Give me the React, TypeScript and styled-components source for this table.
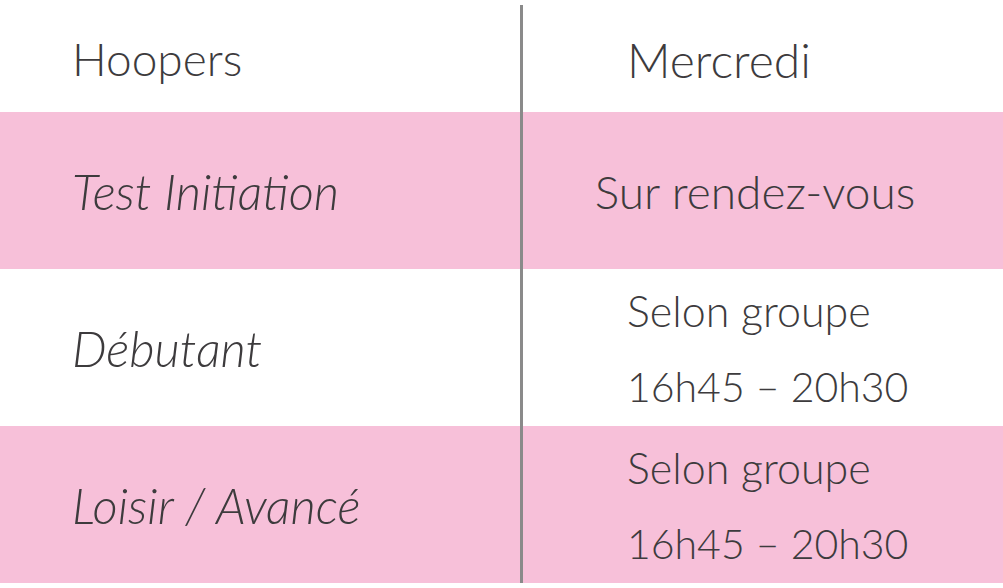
import styled, { createGlobalStyle } from "styled-components"

const Global = createGlobalStyle`
  html, body {
    margin: 0;
    padding: 0;
    background: #ffffff;
  }
  body {
    font-family: Lato, "Open Sans", sans-serif;
    font-weight: 300;
    color: #3d3b3d;
  }
`

const Table = styled.div`
  display: flex;
  flex-direction: column;
  width: 1003px;
  height: 588px;
  padding-top: 5px;
  box-sizing: border-box;
`

const Row = styled.div<{ $pink?: boolean; $height: number }>`
  display: flex;
  height: ${(p) => p.$height}px;
  background: ${(p) => (p.$pink ? "#f7c0d9" : "#ffffff")};
`

const LeftCell = styled.div<{ $italic?: boolean }>`
  width: 523px;
  border-right: 3px solid #8a8a8a;
  display: flex;
  align-items: center;
  padding-left: 72px;
  box-sizing: border-box;
  font-size: ${(p) => (p.$italic ? "49px" : "46px")};
  font-style: ${(p) => (p.$italic ? "italic" : "normal")};
`

const RightCell = styled.div<{ $center?: boolean }>`
  flex: 1;
  display: flex;
  flex-direction: column;
  justify-content: center;
  align-items: ${(p) => (p.$center ? "center" : "flex-start")};
  padding-left: ${(p) => (p.$center ? "0" : "104px")};
  padding-right: ${(p) => (p.$center ? "16px" : "0")};
  padding-top: 2px;
  font-size: 45px;
`

const Line = styled.div<{ $size?: number }>`
  line-height: 76px;
  font-size: ${(p) => (p.$size ? `${p.$size}px` : "inherit")};
`

const rows = [
  { label: "Test Initiation", lines: ["Sur rendez-vous"], pink: true, center: true },
  { label: "Débutant", lines: ["Selon groupe", "16h45 – 20h30"], pink: false },
  { label: "Loisir / Avancé", lines: ["Selon groupe", "16h45 – 20h30"], pink: true },
]

const lineSize = (l: string) => (/\d/.test(l) ? 41 : l.startsWith("Selon") ? 43 : 46)

export default function App() {
  return (
    <>
      <Global />
      <Table>
        <Row $height={107}>
          <LeftCell>Hoopers</LeftCell>
          <RightCell>
            <Line $size={48}>Mercredi</Line>
          </RightCell>
        </Row>
        {rows.map((r) => (
          <Row key={r.label} $pink={r.pink} $height={157}>
            <LeftCell $italic>{r.label}</LeftCell>
            <RightCell $center={r.center}>
              {r.lines.map((l) => (
                <Line key={l} $size={lineSize(l)}>
                  {l}
                </Line>
              ))}
            </RightCell>
          </Row>
        ))}
      </Table>
    </>
  )
}
